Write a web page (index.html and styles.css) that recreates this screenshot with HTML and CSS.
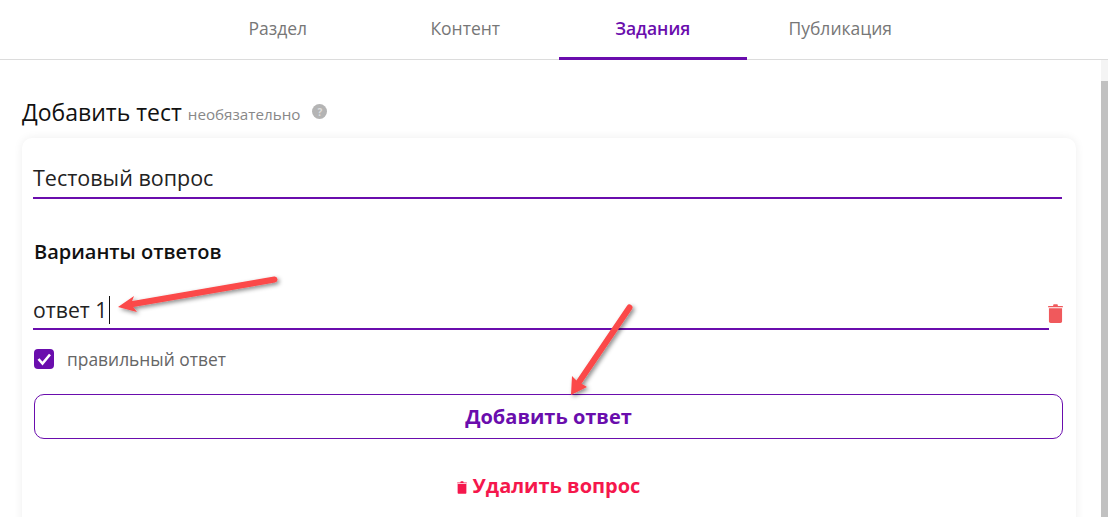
FILE: index.html
```html
<!DOCTYPE html>
<html lang="en">
<head>
    <meta charset="UTF-8">
    <title>Задания</title>
    <link rel="stylesheet" href="styles.css">
</head>
<body>
    <nav class="tabs">
        <a class="tab">Раздел</a>
        <a class="tab">Контент</a>
        <a class="tab active">Задания</a>
        <a class="tab">Публикация</a>
    </nav>
    <div class="page">
        <main class="content">
            <div class="title-row">
                <h1>Добавить тест</h1>
                <span class="optional">необязательно</span>
                <span class="help">?</span>
            </div>
            <section class="card">
                <div class="question">Тестовый вопрос</div>
                <h2>Варианты ответов</h2>
                <div class="answer-row">
                    <div class="answer"><span>ответ 1</span><i class="caret"></i></div>
                    <svg class="trash" viewBox="0 0 16 20">
                        <path d="M5.500 2V1.200C5.500.6 6 0 6.600 0h2.800c.6 0 1.100.6 1.100 1.200V2h4.700c.5 0 .8.300.8.800v.4H0v-.4c0-.5.300-.8.800-.8z"/>
                        <path d="M1 4.500h14v13.700c0 1-.8 1.800-1.800 1.800H2.800C1.800 20 1 19.200 1 18.200z"/>
                    </svg>
                </div>
                <label class="check">
                    <span class="box">
                        <svg viewBox="0 0 20 20"><path d="M4.500 10l4 4.500 7.500-9"/></svg>
                    </span>
                    правильный ответ
                </label>
                <button class="add">Добавить ответ</button>
                <button class="remove">
                    <svg viewBox="0 0 16 20">
                        <path d="M5.500 2V1.200C5.500.6 6 0 6.600 0h2.800c.6 0 1.100.6 1.100 1.200V2h4.700c.5 0 .8.300.8.800v.4H0v-.4c0-.5.300-.8.800-.8z"/>
                        <path d="M1 4.500h14v13.700c0 1-.8 1.800-1.800 1.800H2.800C1.800 20 1 19.200 1 18.200z"/>
                    </svg>
                    Удалить вопрос
                </button>
            </section>
        </main>
        <div class="scrollbar"><div class="thumb"></div></div>
    </div>
    <!-- arrows drawn on top of the screenshot -->
    <svg class="arrows" viewBox="0 0 1108 517">
        <defs>
            <filter id="arrow-shadow" x="-20%" y="-20%" width="140%" height="140%">
                <feDropShadow dx="2" dy="2" stdDeviation="2" flood-color="#000" flood-opacity="0.45"/>
            </filter>
        </defs>
        <g filter="url(#arrow-shadow)">
            <line class="shaft" x1="274.500" y1="279.500" x2="130" y2="304.500"/>
            <polygon class="head" points="118,307 134,296 131,304 137,312"/>
            <line class="shaft" x1="629.500" y1="307.500" x2="579" y2="382"/>
            <polygon class="head" points="571,395 572,376 577,381 587,387"/>
        </g>
    </svg>
</body>
</html>
```

FILE: styles.css
```css
* {
    box-sizing: border-box;
}

body {
    margin: 0;
    height: 517px;
    overflow: hidden;
    position: relative;
    font-family: "Open Sans", sans-serif;
    background: #fff;
    color: #111;
}

.tabs {
    display: flex;
    height: 60px;
    padding-left: 184px;
    border-bottom: 1px solid #dcdcdc;
}

.tab {
    width: 187.500px;
    height: 60px;
    padding-top: 17px;
    text-align: center;
    font-size: 17.500px;
    line-height: 23px;
    color: #777;
}

.tab.active {
    color: #6a0dad;
    font-weight: 600;
    border-bottom: 3px solid #6a0dad;
}

.page {
    display: flex;
    height: 457px;
}

.content {
    flex: 1;
    min-width: 0;
    padding: 36px 25px 0 22px;
    overflow: hidden;
}

.scrollbar {
    width: 7px;
    padding-top: 21px;
    background: #f4f4f4;
}

.thumb {
    height: 100%;
    background: #c1c1c1;
}

.title-row {
    display: flex;
    align-items: center;
    height: 31px;
}

h1 {
    margin: 0;
    font-size: 23px;
    line-height: 30px;
    font-weight: 400;
    color: #111;
}

.optional {
    margin: 5px 0 0 6px;
    font-size: 15.200px;
    color: #888;
}

.help {
    display: flex;
    align-items: center;
    justify-content: center;
    width: 15px;
    height: 15px;
    margin: 0 0 0 12px;
    border-radius: 50%;
    background: #b4b4b4;
    color: #ddd;
    font-size: 10px;
    font-weight: 700;
}

.card {
    height: 420px;
    margin-top: 11px;
    padding: 24px 14px 0 11px;
    border-radius: 10px;
    background: #fff;
    box-shadow: 0 0 10px rgba(0, 0, 0, 0.07);
}

.question {
    height: 37px;
    font-size: 21.500px;
    line-height: 32px;
    color: #222;
    border-bottom: 2px solid #6a0dad;
}

h2 {
    margin: 40px 0 0 1px;
    font-size: 20px;
    line-height: 26px;
    font-weight: 600;
    color: #111;
}

.answer-row {
    display: flex;
    align-items: flex-end;
    margin-top: 30px;
}

.answer {
    flex: 1;
    display: flex;
    align-items: center;
    height: 35px;
    padding-bottom: 3px;
    font-size: 21.200px;
    line-height: 28px;
    color: #222;
    border-bottom: 2px solid #6a0dad;
}

.caret {
    width: 1px;
    height: 28px;
    margin-left: 2px;
    background: #111;
}

.trash {
    width: 15px;
    height: 19px;
    margin: 0 -1px 7px -1px;
    fill: #f0595c;
}

.check {
    display: flex;
    align-items: center;
    gap: 13px;
    margin: 17px 0 0 1px;
    font-size: 17.400px;
    line-height: 24px;
    color: #666;
}

.box {
    width: 20px;
    height: 20px;
    border-radius: 4px;
    background: #6a0dad;
}

.box svg {
    display: block;
    width: 20px;
    height: 20px;
    fill: none;
    stroke: #fff;
    stroke-width: 2.600;
}

.add {
    display: block;
    width: 1029px;
    height: 45px;
    margin: 23px 0 0 1px;
    border: 1px solid #6a0dad;
    border-radius: 10px;
    background: #fff;
    color: #6a0dad;
    font-family: inherit;
    font-size: 20px;
    font-weight: 700;
}

.remove {
    display: flex;
    align-items: center;
    justify-content: center;
    gap: 6px;
    width: 1029px;
    height: 30px;
    margin: 31px 0 0 1px;
    padding: 0;
    border: 0;
    background: none;
    color: #f5174c;
    font-family: inherit;
    font-size: 20px;
    font-weight: 700;
}

.remove svg {
    width: 10px;
    height: 13px;
    margin-top: 4px;
    fill: #f5174c;
}

.arrows {
    position: absolute;
    left: 0;
    top: 0;
    width: 1108px;
    height: 517px;
    pointer-events: none;
}

.shaft {
    stroke: #fb4848;
    stroke-width: 6;
    stroke-linecap: round;
}

.head {
    fill: #fb4848;
}
```
